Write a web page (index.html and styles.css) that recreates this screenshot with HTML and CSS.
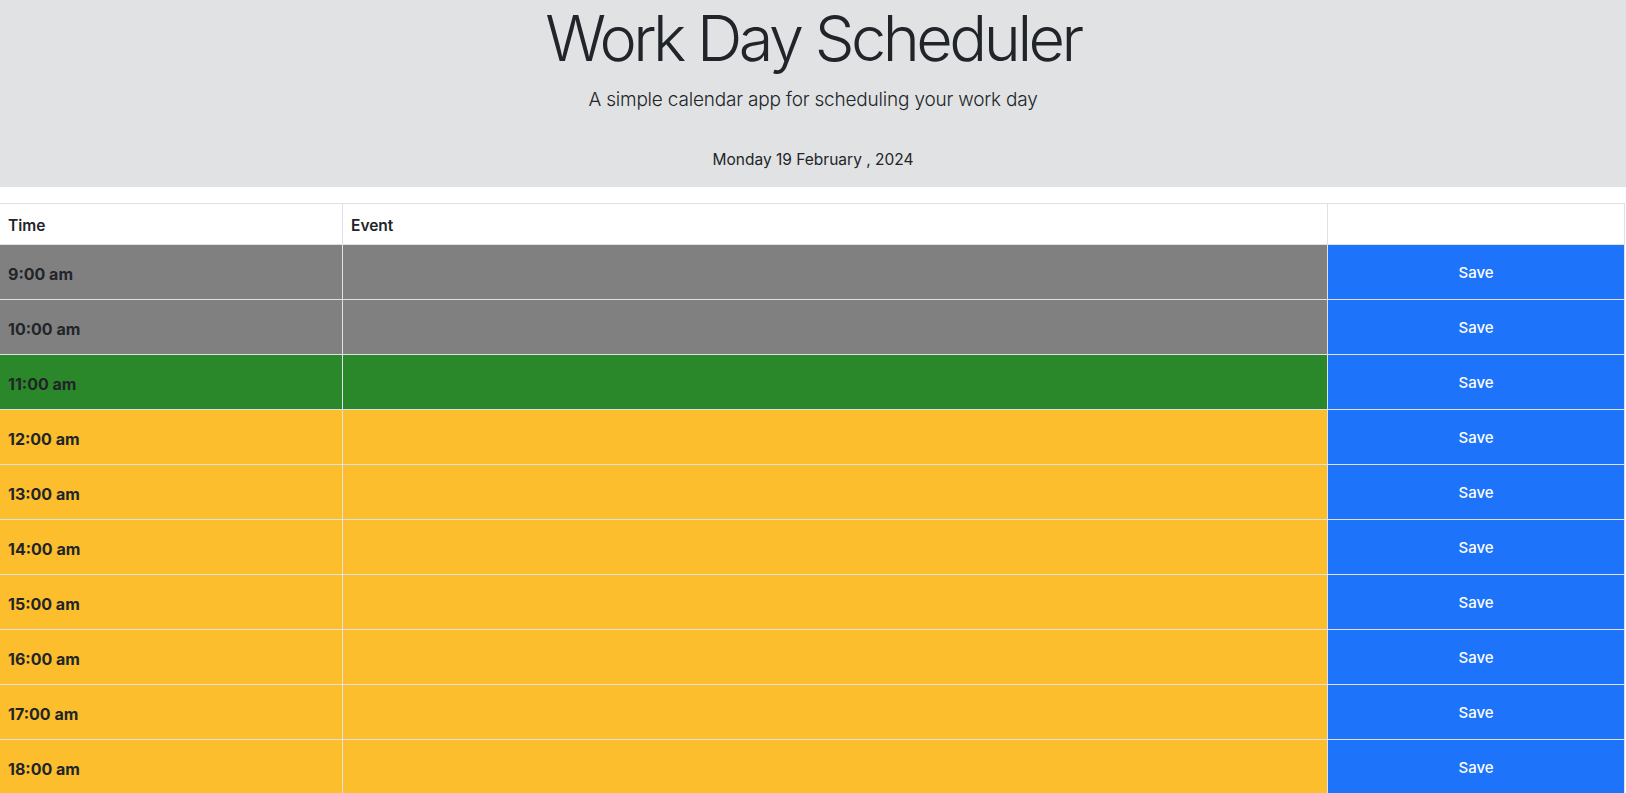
FILE: index.html
```html
<!DOCTYPE html>
<html lang="en">
<head>
<meta charset="utf-8">
<title>Work Day Scheduler</title>
<link rel="stylesheet" href="styles.css">
</head>
<body>
<header class="jumbotron">
  <h1 class="title">Work Day Scheduler</h1>
  <p class="lead">A simple calendar app for scheduling your work day</p>
  <p class="date">Monday 19 February , 2024</p>
</header>
<main class="schedule">
  <div class="row head">
    <div class="cell time">Time</div>
    <div class="cell event">Event</div>
    <div class="cell action"></div>
  </div>
  <div class="row past"><div class="cell time">9:00 am</div><div class="cell event"></div><div class="cell action"><button class="save">Save</button></div></div>
  <div class="row past"><div class="cell time">10:00 am</div><div class="cell event"></div><div class="cell action"><button class="save">Save</button></div></div>
  <div class="row present"><div class="cell time">11:00 am</div><div class="cell event"></div><div class="cell action"><button class="save">Save</button></div></div>
  <div class="row future"><div class="cell time">12:00 am</div><div class="cell event"></div><div class="cell action"><button class="save">Save</button></div></div>
  <div class="row future"><div class="cell time">13:00 am</div><div class="cell event"></div><div class="cell action"><button class="save">Save</button></div></div>
  <div class="row future"><div class="cell time">14:00 am</div><div class="cell event"></div><div class="cell action"><button class="save">Save</button></div></div>
  <div class="row future"><div class="cell time">15:00 am</div><div class="cell event"></div><div class="cell action"><button class="save">Save</button></div></div>
  <div class="row future"><div class="cell time">16:00 am</div><div class="cell event"></div><div class="cell action"><button class="save">Save</button></div></div>
  <div class="row future"><div class="cell time">17:00 am</div><div class="cell event"></div><div class="cell action"><button class="save">Save</button></div></div>
  <div class="row future"><div class="cell time">18:00 am</div><div class="cell event"></div><div class="cell action"><button class="save">Save</button></div></div>
</main>
</body>
</html>
```
FILE: styles.css
```css
* { box-sizing: border-box; }
html, body { margin: 0; padding: 0; }
body {
  font-family: Inter, "Liberation Sans", sans-serif;
  color: #212529;
  background: #fff;
  font-size: 16px;
  line-height: 1.5;
}
.jumbotron {
  background: #e1e2e4;
  height: 187px;
  text-align: center;
  padding-top: 1px;
  margin-bottom: 16px;
}
.title {
  font-size: 63px;
  font-weight: 300;
  line-height: 1.2;
  margin: 0;
  letter-spacing: -3.5px;
}
.lead {
  font-size: 19px;
  font-weight: 300;
  letter-spacing: -0.2px;
  margin: 9px 0 0;
}
.date {
  font-size: 15.5px;
  margin: 34px 0 0;
}
.schedule {
  width: 1625px;
  border-right: 1px solid #dee2e6;
}
.row {
  display: grid;
  grid-template-columns: 342px 985px 1fr;
  height: 55px;
  border-top: 1px solid #dee2e6;
}
.row.head {
  height: 41px;
  background: #fff;
}
.cell {
  display: flex;
  align-items: center;
  padding: 3px 8px 0;
  font-weight: 700;
  font-size: 16px;
  border-left: 1px solid #dee2e6;
}
.head .cell { font-weight: 600; font-size: 15.5px; }
.cell.time { border-left: none; }
.cell.action { padding: 0; }
.past { background: #808080; }
.present { background: #2a872a; }
.future { background: #fcbe2c; }
.save {
  width: 100%;
  height: 100%;
  border: none;
  background: #1d73fa;
  color: #fff;
  font-family: inherit;
  font-size: 15px;
  font-weight: 500;
  padding: 0;
}
```
